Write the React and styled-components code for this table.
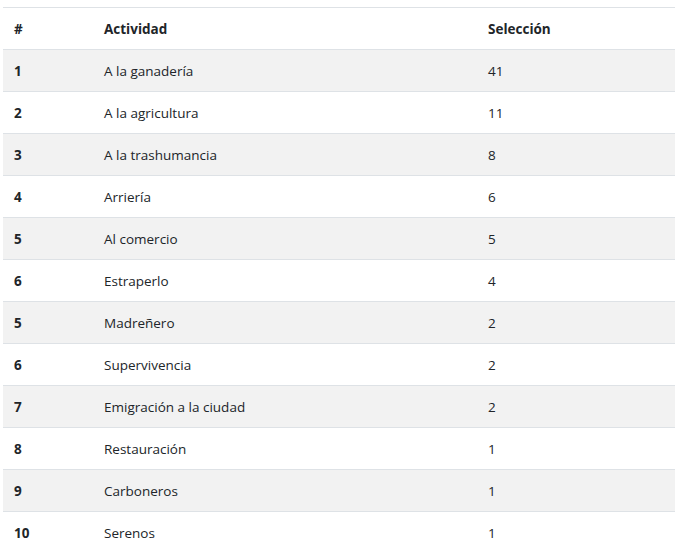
import React from "react";
import styled, { createGlobalStyle } from "styled-components";

const rows = [
    { n: 1, activity: "A la ganadería", count: 41 },
    { n: 2, activity: "A la agricultura", count: 11 },
    { n: 3, activity: "A la trashumancia", count: 8 },
    { n: 4, activity: "Arriería", count: 6 },
    { n: 5, activity: "Al comercio", count: 5 },
    { n: 6, activity: "Estraperlo", count: 4 },
    { n: 5, activity: "Madreñero", count: 2 },
    { n: 6, activity: "Supervivencia", count: 2 },
    { n: 7, activity: "Emigración a la ciudad", count: 2 },
    { n: 8, activity: "Restauración", count: 1 },
    { n: 9, activity: "Carboneros", count: 1 },
    { n: 10, activity: "Serenos", count: 1 },
];

const App = () => {
    return (
        <>
            <GlobalStyle />
            <Wrapper>
                <Table>
                    <colgroup>
                        <col style={{ width: 90 }} />
                        <col style={{ width: 384 }} />
                        <col />
                    </colgroup>
                    <thead>
                        <tr>
                            <HeadCell>#</HeadCell>
                            <HeadCell>Actividad</HeadCell>
                            <HeadCell>Selección</HeadCell>
                        </tr>
                    </thead>
                    <tbody>
                        {rows.map((row, i) => (
                            <Row key={i} $striped={i % 2 === 0}>
                                <NumCell>{row.n}</NumCell>
                                <Cell>{row.activity}</Cell>
                                <Cell>{row.count}</Cell>
                            </Row>
                        ))}
                    </tbody>
                </Table>
            </Wrapper>
        </>
    );
};

export default App;

// Styled Components
const GlobalStyle = createGlobalStyle`
  body {
    margin: 0;
    background: #fff;
    font-family: "Open Sans", "Noto Sans", sans-serif;
    color: #212529;
  }
`;

const Wrapper = styled.div`
  padding: 7px 4px 0 3px;
`;

const Table = styled.table`
  width: 672px;
  border-collapse: collapse;
  table-layout: fixed;
  font-size: 13.5px;
`;

const HeadCell = styled.th`
  height: 42px;
  padding: 0 11px;
  text-align: left;
  font-weight: 700;
  border-top: 1px solid #dee2e6;
  border-bottom: 1px solid #dee2e6;
  box-sizing: border-box;
`;

const Row = styled.tr`
  background: ${(p) => (p.$striped ? "#f2f2f2" : "#fff")};
`;

const Cell = styled.td`
  height: 42px;
  padding: 0 11px;
  border-bottom: 1px solid #dee2e6;
  box-sizing: border-box;
`;

const NumCell = styled(Cell)`
  font-weight: 700;
`;
